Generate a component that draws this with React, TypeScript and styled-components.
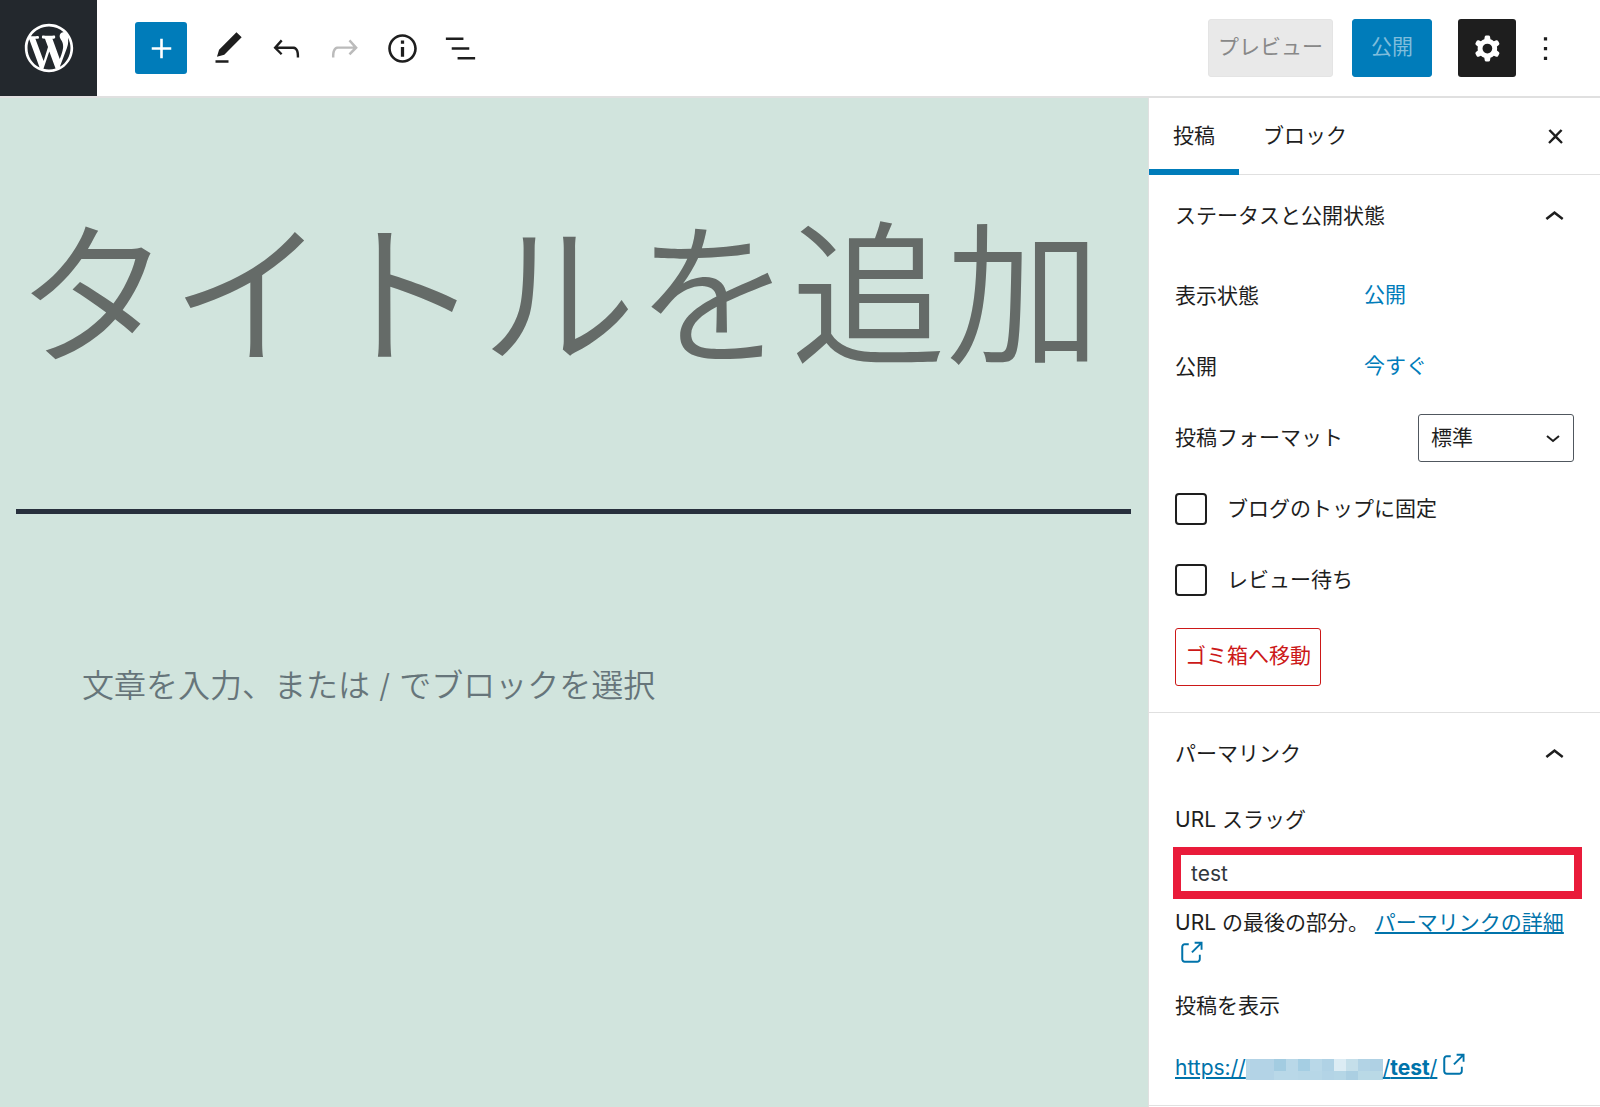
import React, { useState } from "react";
import styled, { createGlobalStyle } from "styled-components";

const FONT = `Inter, "Noto Sans CJK JP", sans-serif`;
const BLUE = "#007cba";
const LINK = "#0073aa";
const INK = "#1e1e1e";
const LINE = "#e0e0e0";

const GlobalStyle = createGlobalStyle`
  *, *::before, *::after { box-sizing: border-box; }
  body { margin: 0; background: #fff; font-family: ${FONT}; color: ${INK}; }
  button, input, select, textarea { font-family: inherit; color: inherit; margin: 0; }
`;

const Page = styled.div`
  display: flex;
  flex-direction: column;
  min-height: 100vh;
  font-size: 21px;
  line-height: 30px;
`;

const Header = styled.header`
  display: flex;
  align-items: center;
  height: 98px;
  border-bottom: 2px solid ${LINE};
  background: #fff;
`;

const HomeLink = styled.a`
  display: flex;
  align-items: center;
  justify-content: center;
  align-self: stretch;
  width: 97px;
  background: #23282d;
  color: #fff;
`;

const Tools = styled.div`
  display: flex;
  align-items: center;
  flex: 1;
  padding-left: 38px;
`;

const Actions = styled.div`
  display: flex;
  align-items: center;
  padding-right: 26px;
`;

const ToolButton = styled.button<{ $dark?: boolean }>`
  display: flex;
  align-items: center;
  justify-content: center;
  width: 58px;
  height: 58px;
  padding: 0;
  border: 0;
  border-radius: 3px;
  background: ${(p) => (p.$dark ? INK : "transparent")};
  color: ${(p) => (p.$dark ? "#fff" : INK)};

  &:disabled {
    color: #bbb;
  }
`;

const AddButton = styled(ToolButton)`
  width: 52px;
  height: 52px;
  margin-right: 12px;
  background: ${BLUE};
  color: #fff;
`;

const TextButton = styled.button<{ $kind: "preview" | "publish" | "trash" }>`
  height: 58px;
  border-radius: 3px;
  font-size: 21px;
  line-height: 30px;
  padding: 0 ${(p) => (p.$kind === "publish" ? 18 : 9)}px 2px;
  border: 1px solid
    ${(p) => (p.$kind === "preview" ? "#e4e4e4" : p.$kind === "publish" ? BLUE : "#cc1818")};
  background: ${(p) =>
    p.$kind === "preview" ? "#e9e9e9" : p.$kind === "publish" ? BLUE : "#fff"};
  color: ${(p) =>
    p.$kind === "preview" ? "#888" : p.$kind === "publish" ? "#7fbddc" : "#cc1818"};
  margin-right: ${(p) => (p.$kind === "preview" ? 19 : p.$kind === "publish" ? 26 : 0)}px;
`;

const Body = styled.div`
  display: flex;
  flex: 1;
`;

const Canvas = styled.main`
  flex: 1;
  min-width: 0;
  padding: 80px 17px 0 16px;
  background: #d1e4dd;
`;

const TitleField = styled.textarea`
  display: block;
  width: 100%;
  height: 336px;
  padding: 0;
  border: 0;
  border-bottom: 5px solid #28303d;
  border-radius: 0;
  background: transparent;
  resize: none;
  overflow: hidden;
  font-size: 155px;
  font-weight: 350;
  line-height: 236px;
  outline: none;

  &::placeholder {
    color: #656b68;
    opacity: 1;
  }
`;

const ParagraphField = styled.input`
  display: block;
  width: 100%;
  height: 54px;
  margin-top: 145px;
  padding: 0 66px;
  border: 0;
  background: transparent;
  font-size: 32px;
  font-weight: 350;
  line-height: 54px;
  outline: none;

  &::placeholder {
    color: #66757a;
    opacity: 1;
  }
`;

const Sidebar = styled.aside`
  width: 452px;
  border-left: 1px solid ${LINE};
  background: #fff;
`;

const Tabs = styled.div`
  display: flex;
  height: 77px;
  border-bottom: 1px solid ${LINE};
`;

const Tab = styled.button<{ $active?: boolean }>`
  padding: 0 24px 2px;
  margin-bottom: -1px;
  border: 0;
  border-top: 6px solid transparent;
  border-bottom: 6px solid ${(p) => (p.$active ? BLUE : "transparent")};
  background: transparent;
  font-size: 21px;
  line-height: 30px;
`;

const CloseButton = styled(ToolButton)`
  margin: 9px 16px 0 auto;
`;

const Panel = styled.section`
  padding: 0 26px 26px;
  border-bottom: 1px solid ${LINE};

  &:last-child {
    padding-bottom: 22px;
  }
`;

const PanelHeading = styled.h2`
  margin: 0;
  font-size: 21px;
  font-weight: 400;
`;

const PanelToggle = styled.button`
  display: flex;
  align-items: center;
  justify-content: space-between;
  width: 100%;
  height: 81px;
  padding: 0;
  border: 0;
  background: transparent;
  font-size: 21px;
  line-height: 30px;
  text-align: left;
`;

const Rows = styled.div`
  display: flex;
  flex-direction: column;
  gap: 13px;
  padding: 11px 0 19px;
`;

const Row = styled.div`
  display: flex;
  align-items: center;
  height: 58px;
`;

const RowName = styled.span`
  width: 189px;
`;

const FormatLabel = styled.label`
  flex: 1;
`;

const LinkButton = styled.button`
  padding: 0 0 2px;
  border: 0;
  background: transparent;
  color: ${BLUE};
  font-size: 21px;
  line-height: 30px;
`;

const SelectBox = styled.div`
  display: grid;
  width: 156px;
  align-items: center;

  & > * {
    grid-area: 1 / 1;
  }

  & > svg {
    justify-self: end;
    margin: 2px 14px 0 0;
    pointer-events: none;
  }
`;

const Select = styled.select`
  appearance: none;
  width: 100%;
  height: 48px;
  padding: 0 12px;
  border: 1px solid #50575e;
  border-radius: 3px;
  background: #fff;
  font-size: 21px;
  line-height: 30px;
`;

const Checkbox = styled.input`
  appearance: none;
  flex: none;
  width: 32px;
  height: 32px;
  margin-right: 20px;
  border: 2px solid ${INK};
  border-radius: 4px;
  background: #fff;

  &:checked {
    background: ${BLUE};
  }
`;

const FieldLabel = styled.label`
  display: block;
  padding-top: 11px;
  margin-bottom: 12px;
`;

const SlugInput = styled.input`
  display: block;
  width: calc(100% + 10px);
  height: 52px;
  margin-left: -2px;
  padding: 0 10px;
  border: 8px solid #e91b3a;
  border-radius: 0;
  background: #fff;
  color: #32373c;
  font-size: 21px;
  line-height: 30px;
  outline: none;
`;

const Help = styled.p`
  margin: 9px 0 0;
`;

const ExternalLink = styled.a`
  color: ${LINK};
  text-underline-offset: 2px;

  & > svg {
    margin-left: 1px;
    vertical-align: -5px;
  }
`;

const ViewLabel = styled.p`
  margin: 20px 0 29px;
`;

const Mosaic = styled.span`
  display: inline-grid;
  grid-template: 12px 9px / 4px repeat(10, 12px) 13px;
  vertical-align: middle;
`;

const Tile = styled.span<{ $tone: string }>`
  background: ${(p) => p.$tone};
`;

const paths = {
  plus: "M18 11.2h-5.2V6h-1.6v5.2H6v1.6h5.2V18h1.6v-5.2H18z",
  edit: "M20.1 5.1L16.9 2 6.2 12.7l-1.3 4.4 4.5-1.3L20.1 5.1zM4 20.8h8v-1.5H4v1.5z",
  undo: "M18.3 11.7c-.6-.6-1.4-.9-2.3-.9H6.7l2.9-3.3-1.1-1-4.5 5L8.5 16l1-1-2.7-2.7H16c.5 0 .9.2 1.3.5 1 1 1 3.4 1 4.5v.3h1.5v-.2c0-1.5 0-4.3-1.5-5.7z",
  redo: "M15.6 6.5l-1.1 1 2.9 3.3H8c-.9 0-1.7.3-2.3.9-1.4 1.5-1.4 4.2-1.4 5.6v.2h1.5v-.3c0-1.1 0-3.5 1-4.5.3-.3.7-.5 1.3-.5h9.2L14.5 15l1.1 1.1 4.6-4.6-4.6-5z",
  info: "M12 3.2c-4.8 0-8.8 3.9-8.8 8.8 0 4.8 3.9 8.8 8.8 8.8 4.8 0 8.8-3.9 8.8-8.8 0-4.8-4-8.8-8.8-8.8zm0 16c-4 0-7.2-3.3-7.2-7.2C4.8 8 8 4.8 12 4.8s7.2 3.3 7.2 7.2c0 4-3.2 7.2-7.2 7.2zM11 17h2v-6h-2v6zm0-8h2V7h-2v2z",
  list: "M13.8 5.2H3v1.5h10.8V5.2zm-3.6 12v1.5H21v-1.5H10.2zm7.2-6H6.6v1.5h10.8v-1.5z",
  cog: "M10.289 4.836A1 1 0 0111.275 4h1.306a1 1 0 01.987.836l.244 1.466c.787.26 1.503.679 2.108 1.218l1.393-.522a1 1 0 011.216.437l.653 1.13a1 1 0 01-.23 1.273l-1.148.944a6.025 6.025 0 010 2.435l1.149.946a1 1 0 01.23 1.272l-.653 1.13a1 1 0 01-1.216.437l-1.394-.522c-.605.54-1.32.958-2.108 1.218l-.244 1.466a1 1 0 01-.987.836h-1.306a1 1 0 01-.986-.836l-.244-1.466a5.995 5.995 0 01-2.108-1.218l-1.394.522a1 1 0 01-1.217-.436l-.653-1.131a1 1 0 01.23-1.272l1.149-.946a6.026 6.026 0 010-2.435l-1.148-.944a1 1 0 01-.23-1.272l.653-1.131a1 1 0 011.217-.437l1.393.522a5.994 5.994 0 012.108-1.218l.244-1.466zM14.929 12a3 3 0 11-6 0 3 3 0 016 0z",
  more: "M13 19h-2v-2h2v2zm0-6h-2v-2h2v2zm0-6h-2V5h2v2z",
  close: "M13 11.9l3.3-3.4-1.1-1-3.2 3.3-3.2-3.3-1.1 1 3.3 3.4-3.5 3.6 1 1L12 13l3.5 3.5 1-1z",
  up: "M6.5 13.6L12 9.2l5.5 4.4-.9 1.2L12 11.2l-4.5 3.6-1-1.2z",
  external:
    "M18.2 17c0 .7-.6 1.2-1.2 1.2H7c-.7 0-1.2-.6-1.2-1.2V7c0-.7.6-1.2 1.2-1.2h3.2V4.2H7C5.5 4.2 4.2 5.5 4.2 7v10c0 1.5 1.2 2.8 2.8 2.8h10c1.5 0 2.8-1.2 2.8-2.8v-3.6h-1.5V17zM14.9 3v1.5h3.7l-6.4 6.4 1.1 1.1 6.4-6.4v3.7h1.5V3h-6.3z",
  wordpress:
    "M20 10c0-5.51-4.49-10-10-10C4.48 0 0 4.49 0 10c0 5.52 4.48 10 10 10 5.51 0 10-4.48 10-10zM7.78 15.37L4.37 6.22c.55-.02 1.17-.08 1.17-.08.5-.06.44-1.13-.06-1.11 0 0-1.45.11-2.37.11-.18 0-.37 0-.58-.01C4.12 2.69 6.87 1.11 10 1.11c2.33 0 4.45.87 6.05 2.34-.68-.11-1.65.39-1.65 1.58 0 .74.45 1.36.9 2.1.35.61.55 1.36.55 2.46 0 1.49-1.4 5-1.4 5l-3.03-8.37c.54-.02.82-.17.82-.17.5-.05.44-1.25-.06-1.22 0 0-1.44.12-2.38.12-.87 0-2.33-.12-2.33-.12-.5-.03-.56 1.2-.06 1.22l.92.08 1.26 3.41zM17.41 10c.24-.64.74-1.87.43-4.25.7 1.29 1.05 2.71 1.05 4.25 0 3.29-1.73 6.24-4.4 7.78.97-2.59 1.94-5.2 2.92-7.78zM6.1 18.09C3.12 16.65 1.11 13.53 1.11 10c0-1.3.23-2.48.72-3.59C3.25 10.3 4.67 14.2 6.1 18.09zm4.03-6.63l2.58 6.98c-.86.29-1.76.45-2.71.45-.79 0-1.57-.11-2.29-.33.81-2.38 1.62-4.74 2.42-7.1z",
};

type IconProps = { name: keyof typeof paths; size?: number; viewBox?: string };

const Icon = ({ name, size = 39, viewBox = "0 0 24 24" }: IconProps) => (
  <svg width={size} height={size} viewBox={viewBox} fill="currentColor" aria-hidden="true">
    <path fillRule="evenodd" d={paths[name]} />
  </svg>
);

const tiles = [
  "#b9d8e8", "#b3d3e6", "#b3d3e6", "#a3cce1", "#b9d8e8", "#a5cee3", "#b9d8e8", "#b0d2e5", "#dcecf4", "#c5dfea", "#b2d3e5", "#afd1e4",
  "#b9d8e8", "#b3d3e6", "#b3d3e6", "#b9d8e8", "#b9d8e8", "#b7d7e7", "#b7d7e7", "#b3d4e6", "#b5d6e6", "#abcfe2", "#b9d9e6", "#b9d9e6",
];

type PanelProps = { title: string; children: React.ReactNode };

const SettingsPanel = ({ title, children }: PanelProps) => {
  const [open, setOpen] = useState(true);
  return (
    <Panel>
      <PanelHeading>
        <PanelToggle type="button" aria-expanded={open} onClick={() => setOpen(!open)}>
          {title}
          <Icon name="up" />
        </PanelToggle>
      </PanelHeading>
      {open && children}
    </Panel>
  );
};

export default function App() {
  const [slug, setSlug] = useState("test");
  return (
    <Page>
      <GlobalStyle />
      <Header>
        <HomeLink href="#" aria-label="WordPress">
          <Icon name="wordpress" size={58} viewBox="-2 -2 24 24" />
        </HomeLink>
        <Tools>
          <AddButton type="button" aria-label="ブロックを追加"><Icon name="plus" /></AddButton>
          <ToolButton type="button" aria-label="ツール"><Icon name="edit" /></ToolButton>
          <ToolButton type="button" aria-label="元に戻す"><Icon name="undo" /></ToolButton>
          <ToolButton type="button" aria-label="やり直す" disabled><Icon name="redo" /></ToolButton>
          <ToolButton type="button" aria-label="詳細"><Icon name="info" /></ToolButton>
          <ToolButton type="button" aria-label="リスト表示"><Icon name="list" /></ToolButton>
        </Tools>
        <Actions>
          <TextButton type="button" $kind="preview" disabled>プレビュー</TextButton>
          <TextButton type="button" $kind="publish" disabled>公開</TextButton>
          <ToolButton type="button" $dark aria-label="設定"><Icon name="cog" /></ToolButton>
          <ToolButton type="button" aria-label="オプション"><Icon name="more" /></ToolButton>
        </Actions>
      </Header>
      <Body>
        <Canvas>
          <TitleField aria-label="タイトルを追加" placeholder="タイトルを追加" rows={1} />
          <ParagraphField
            aria-label="段落ブロック"
            placeholder="文章を入力、または / でブロックを選択"
          />
        </Canvas>
        <Sidebar>
          <Tabs>
            <Tab type="button" $active>投稿</Tab>
            <Tab type="button">ブロック</Tab>
            <CloseButton type="button" aria-label="設定を閉じる"><Icon name="close" /></CloseButton>
          </Tabs>
          <SettingsPanel title="ステータスと公開状態">
            <Rows>
              <Row>
                <RowName>表示状態</RowName>
                <LinkButton type="button">公開</LinkButton>
              </Row>
              <Row>
                <RowName>公開</RowName>
                <LinkButton type="button">今すぐ</LinkButton>
              </Row>
              <Row>
                <FormatLabel htmlFor="format">投稿フォーマット</FormatLabel>
                <SelectBox>
                  <Select id="format" defaultValue="standard">
                    <option value="standard">標準</option>
                  </Select>
                  <svg width="14" height="8" viewBox="0 0 14 8" fill="none" aria-hidden="true">
                    <path d="M1 1l6 5 6-5" stroke={INK} strokeWidth="2" />
                  </svg>
                </SelectBox>
              </Row>
              <Row>
                <Checkbox type="checkbox" id="sticky" />
                <label htmlFor="sticky">ブログのトップに固定</label>
              </Row>
              <Row>
                <Checkbox type="checkbox" id="pending" />
                <label htmlFor="pending">レビュー待ち</label>
              </Row>
            </Rows>
            <TextButton type="button" $kind="trash">ゴミ箱へ移動</TextButton>
          </SettingsPanel>
          <SettingsPanel title="パーマリンク">
            <FieldLabel htmlFor="slug">URL スラッグ</FieldLabel>
            <SlugInput id="slug" type="text" value={slug} onChange={(e) => setSlug(e.target.value)} />
            <Help>
              URL の最後の部分。{" "}
              <ExternalLink href="#">
                パーマリンクの詳細
                <Icon name="external" size={30} />
              </ExternalLink>
            </Help>
            <ViewLabel>投稿を表示</ViewLabel>
            <ExternalLink href="#">
              https://
              <Mosaic aria-hidden="true">
                {tiles.map((tone, i) => (
                  <Tile key={i} $tone={tone} />
                ))}
              </Mosaic>
              /<b>test</b>/
              <Icon name="external" size={30} />
            </ExternalLink>
          </SettingsPanel>
        </Sidebar>
      </Body>
    </Page>
  );
}
